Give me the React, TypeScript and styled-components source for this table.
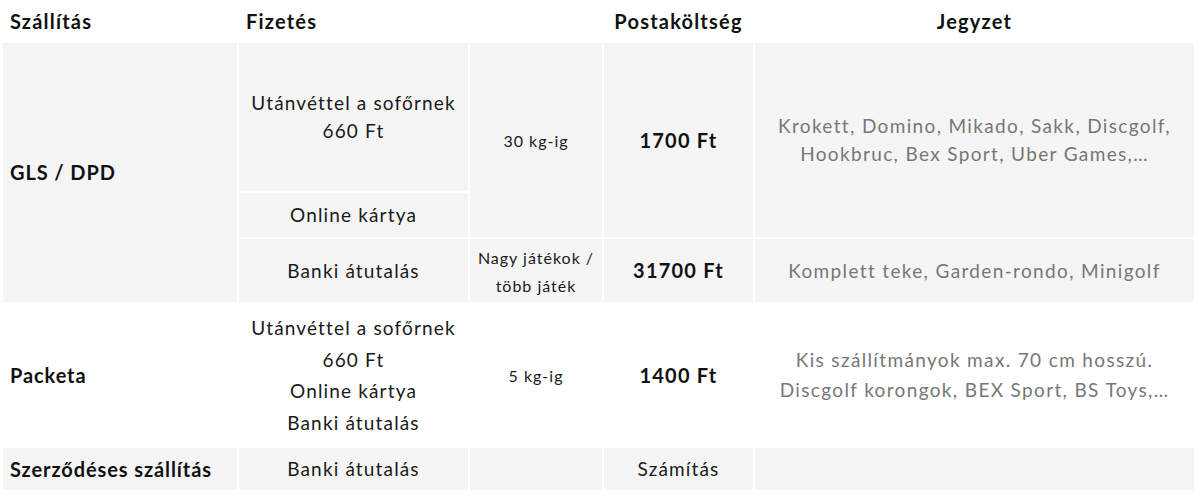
import styled, { createGlobalStyle } from 'styled-components'

const GlobalStyle = createGlobalStyle`
  html, body {
    margin: 0;
    padding: 0;
    background: #ffffff;
  }
  body {
    font-family: Lato, "Noto Sans", "Liberation Sans", sans-serif;
    color: #1a1a1a;
  }
`

const Wrapper = styled.div`
  width: 1200px;
  padding-left: 1px;
  box-sizing: border-box;
`

const Table = styled.table`
  width: 1195px;
  border-collapse: separate;
  border-spacing: 2px;
  table-layout: fixed;
  margin-top: -2px;
`

const HeadRow = styled.tr`
  height: 41px;
`

const BodyRow = styled.tr<{ $h: number }>`
  height: ${(p) => p.$h}px;
`

const HeadCell = styled.th<{ $align?: 'left' | 'center' }>`
  text-align: ${(p) => p.$align || 'left'};
  font-size: 20px;
  font-weight: 700;
  letter-spacing: 1.2px;
  padding: 0 7px;
  vertical-align: middle;
  color: #111;
  white-space: nowrap;
`

const Cell = styled.td<{ $tone?: 'grey' | 'white'; $align?: 'left' | 'center' }>`
  background: ${(p) => (p.$tone === 'white' ? '#ffffff' : '#f5f5f5')};
  text-align: ${(p) => p.$align || 'center'};
  vertical-align: middle;
  padding: 0 7px;
  font-size: 19px;
  letter-spacing: 1.15px;
  line-height: 28px;
  color: #1a1a1a;
  white-space: nowrap;
`

const Carrier = styled.span`
  font-weight: 700;
  font-size: 20px;
  letter-spacing: 0.9px;
  color: #111;
`

const Small = styled.span`
  font-size: 16px;
  letter-spacing: 1px;
  line-height: 26px;
`

const Price = styled.span`
  font-weight: 700;
  font-size: 20px;
  letter-spacing: 1.2px;
  color: #111;
`

const Note = styled.span<{ $lh?: number }>`
  color: #777;
  font-size: 19px;
  letter-spacing: 1.35px;
  line-height: ${(p) => p.$lh || 28}px;
`

const Lines = styled.div`
  line-height: 31.5px;
`

export default function App() {
  return (
    <Wrapper>
      <GlobalStyle />
      <Table>
        <colgroup>
          <col style={{ width: 234 }} />
          <col style={{ width: 229 }} />
          <col style={{ width: 132 }} />
          <col style={{ width: 149 }} />
          <col style={{ width: 439 }} />
        </colgroup>
        <thead>
          <HeadRow>
            <HeadCell>Szállítás</HeadCell>
            <HeadCell>Fizetés</HeadCell>
            <HeadCell />
            <HeadCell $align="center">Postaköltség</HeadCell>
            <HeadCell $align="center">Jegyzet</HeadCell>
          </HeadRow>
        </thead>
        <tbody>
          <BodyRow $h={148}>
            <Cell rowSpan={3} $align="left">
              <Carrier>GLS / DPD</Carrier>
            </Cell>
            <Cell>
              Utánvéttel a sofőrnek
              <br />
              660 Ft
            </Cell>
            <Cell rowSpan={2}>
              <Small>30 kg-ig</Small>
            </Cell>
            <Cell rowSpan={2}>
              <Price>1700 Ft</Price>
            </Cell>
            <Cell rowSpan={2}>
              <Note>
                Krokett, Domino, Mikado, Sakk, Discgolf,
                <br />
                Hookbruc, Bex Sport, Uber Games,…
              </Note>
            </Cell>
          </BodyRow>
          <BodyRow $h={44}>
            <Cell>Online kártya</Cell>
          </BodyRow>
          <BodyRow $h={63}>
            <Cell>Banki átutalás</Cell>
            <Cell>
              <Small>
                Nagy játékok /
                <br />
                több játék
              </Small>
            </Cell>
            <Cell>
              <Price>31700 Ft</Price>
            </Cell>
            <Cell>
              <Note>Komplett teke, Garden-rondo, Minigolf</Note>
            </Cell>
          </BodyRow>
          <BodyRow $h={142}>
            <Cell $tone="white" $align="left">
              <Carrier>Packeta</Carrier>
            </Cell>
            <Cell $tone="white">
              <Lines>
                Utánvéttel a sofőrnek
                <br />
                660 Ft
                <br />
                Online kártya
                <br />
                Banki átutalás
              </Lines>
            </Cell>
            <Cell $tone="white">
              <Small>5 kg-ig</Small>
            </Cell>
            <Cell $tone="white">
              <Price>1400 Ft</Price>
            </Cell>
            <Cell $tone="white">
              <Note $lh={30}>
                Kis szállítmányok max. 70 cm hosszú.
                <br />
                Discgolf korongok, BEX Sport, BS Toys,…
              </Note>
            </Cell>
          </BodyRow>
          <BodyRow $h={42}>
            <Cell $align="left">
              <Carrier>Szerződéses szállítás</Carrier>
            </Cell>
            <Cell>Banki átutalás</Cell>
            <Cell />
            <Cell>Számítás</Cell>
            <Cell />
          </BodyRow>
        </tbody>
      </Table>
    </Wrapper>
  )
}
